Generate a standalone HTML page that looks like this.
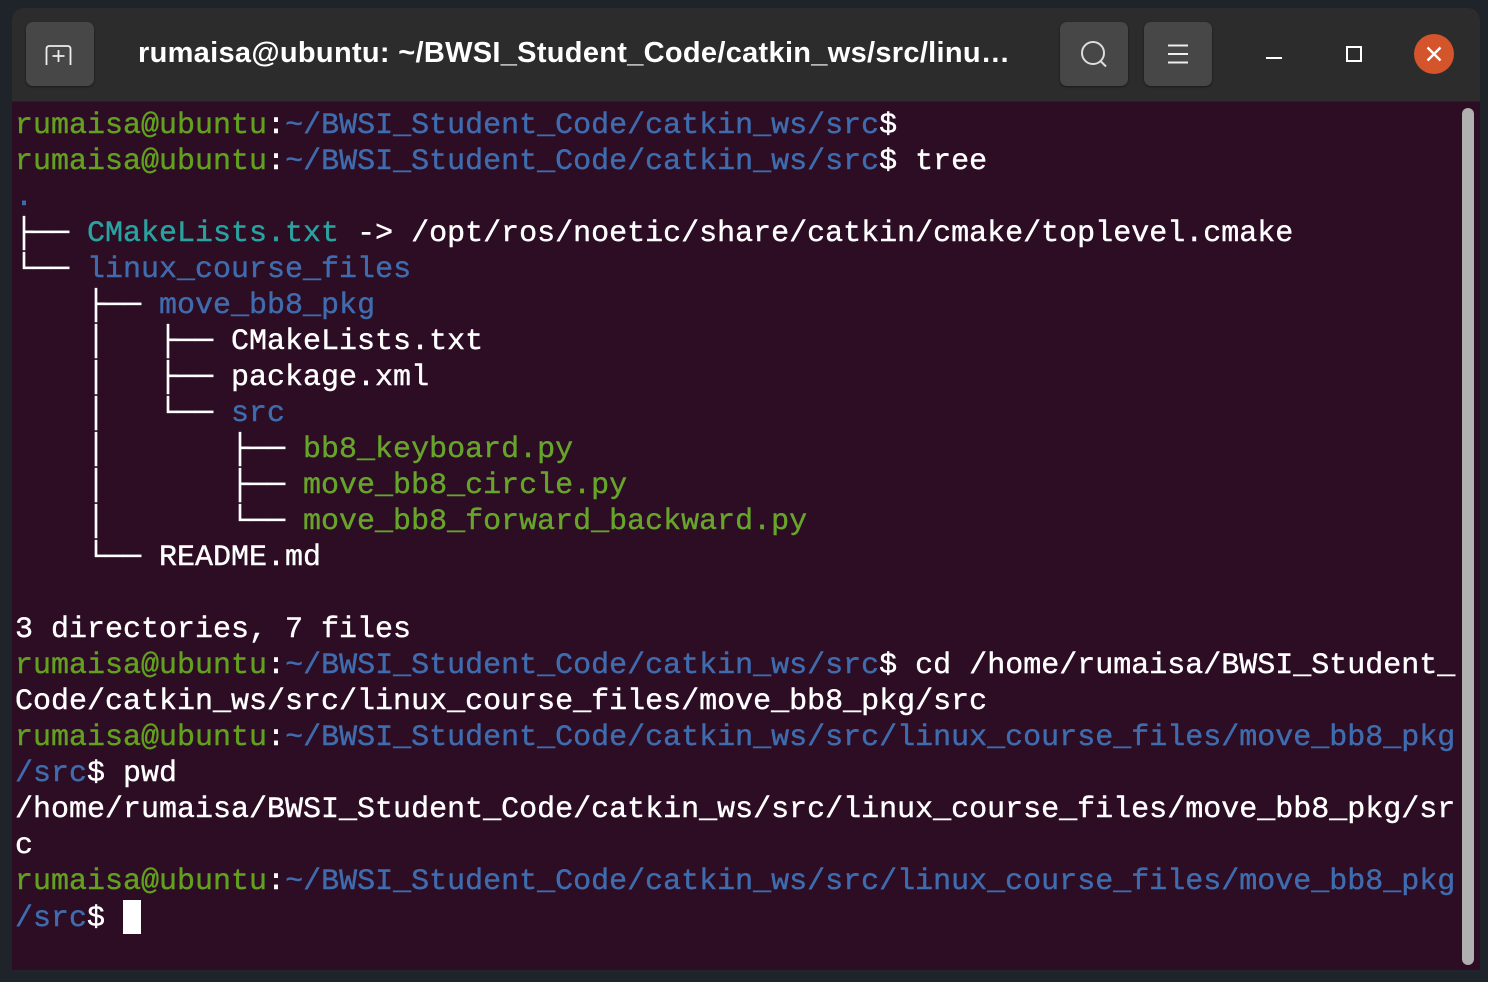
<!DOCTYPE html>
<html><head><meta charset="utf-8"><style>
html,body{margin:0;padding:0;width:1488px;height:982px;background:#1f242b;overflow:hidden}
.win{position:absolute;left:12px;top:8px;width:1468px;height:962px;background:#2c0d24;border-radius:12px 12px 0 0;overflow:hidden}
.tb{position:absolute;left:0;top:0;width:1468px;height:93px;background:#2c2c2c;border-bottom:1px solid #222}
.btn{position:absolute;top:14px;width:68px;height:64px;background:#474747;border-radius:7px;box-shadow:0 1px 2px #1a1a1a}
.title{position:absolute;left:126px;top:29px;font:bold 29px "Liberation Sans","DejaVu Sans",sans-serif;color:#fff;white-space:nowrap;letter-spacing:0.3px}
.term{position:absolute;left:3px;top:100px;font-family:"Liberation Mono","DejaVu Sans Mono",monospace;font-size:30px;line-height:36px;color:#fff;white-space:pre;-webkit-text-stroke:0.4px currentColor}
.g{color:#62a11e}.b{color:#3f6cae}.c{color:#2aa3a0}.gf{color:#66a52a}
.cur{display:inline-block;width:18px;height:34px;background:#fff;vertical-align:-8px}
.sb{position:absolute;left:1450px;top:100px;width:12px;height:857px;background:#b0b0b0;border-radius:6px}
</style></head><body>
<div class="win">
<div class="tb">
<div class="btn" style="left:14px"><svg width="68" height="64" viewBox="0 0 68 64"><path d="M20.5 43 V27 Q20.5 24 23.5 24 H41.5 Q44.5 24 44.5 27 V43" fill="none" stroke="#eee" stroke-width="1.8"/><path d="M32.5 28 V40 M26.5 34 H38.5" stroke="#eee" stroke-width="1.8"/></svg></div>
<div class="title">rumaisa@ubuntu: ~/BWSI_Student_Code/catkin_ws/src/linu…</div>
<div class="btn" style="left:1048px"><svg width="68" height="64" viewBox="0 0 68 64"><circle cx="33" cy="31" r="11" fill="none" stroke="#ddd" stroke-width="2"/><path d="M40.5 39 L46 44.5" stroke="#ddd" stroke-width="2"/></svg></div>
<div class="btn" style="left:1132px"><svg width="68" height="64" viewBox="0 0 68 64"><path d="M24 23.5 H44 M24 32 H44 M24 40.5 H44" stroke="#eee" stroke-width="2"/></svg></div>
<div style="position:absolute;left:1254px;top:49px;width:16px;height:2px;background:#fff"></div>
<div style="position:absolute;left:1334px;top:38px;width:12px;height:12px;border:2px solid #fff"></div>
<svg style="position:absolute;left:1402px;top:26px" width="40" height="40" viewBox="0 0 40 40"><circle cx="20" cy="20" r="20" fill="#d4542c"/><path d="M13.5 13.5 L26.5 26.5 M26.5 13.5 L13.5 26.5" stroke="#fff" stroke-width="2.4"/></svg>
</div>
<div class="term"><span class="g">rumaisa@ubuntu</span>:<span class="b">~/BWSI_Student_Code/catkin_ws/src</span>$
<span class="g">rumaisa@ubuntu</span>:<span class="b">~/BWSI_Student_Code/catkin_ws/src</span>$ tree
<span class="b">.</span>
├── <span class="c">CMakeLists.txt</span> -> /opt/ros/noetic/share/catkin/cmake/toplevel.cmake
└── <span class="b">linux_course_files</span>
    ├── <span class="b">move_bb8_pkg</span>
    │   ├── CMakeLists.txt
    │   ├── package.xml
    │   └── <span class="b">src</span>
    │       ├── <span class="gf">bb8_keyboard.py</span>
    │       ├── <span class="gf">move_bb8_circle.py</span>
    │       └── <span class="gf">move_bb8_forward_backward.py</span>
    └── README.md

3 directories, 7 files
<span class="g">rumaisa@ubuntu</span>:<span class="b">~/BWSI_Student_Code/catkin_ws/src</span>$ cd /home/rumaisa/BWSI_Student_
Code/catkin_ws/src/linux_course_files/move_bb8_pkg/src
<span class="g">rumaisa@ubuntu</span>:<span class="b">~/BWSI_Student_Code/catkin_ws/src/linux_course_files/move_bb8_pkg</span>
<span class="b">/src</span>$ pwd
/home/rumaisa/BWSI_Student_Code/catkin_ws/src/linux_course_files/move_bb8_pkg/sr
c
<span class="g">rumaisa@ubuntu</span>:<span class="b">~/BWSI_Student_Code/catkin_ws/src/linux_course_files/move_bb8_pkg</span>
<span class="b">/src</span>$ <span class="cur"></span></div>
<div class="sb"></div>
</div>
</body></html>
